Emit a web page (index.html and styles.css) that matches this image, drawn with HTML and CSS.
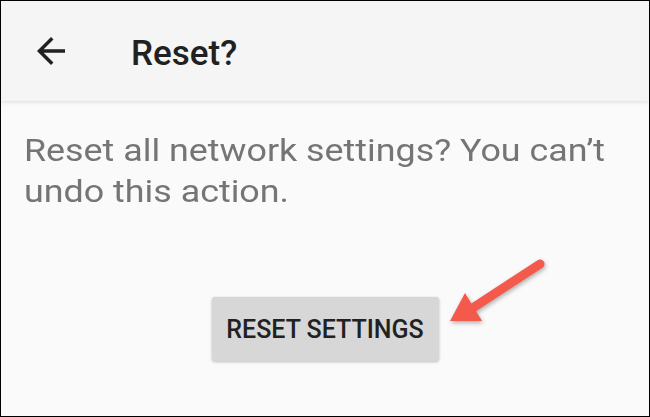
FILE: index.html
```html
<!DOCTYPE html>
<html lang="en">
<head>
    <meta charset="UTF-8">
    <meta name="viewport" content="width=device-width, initial-scale=1.0">
    <title>Reset?</title>
    <link rel="stylesheet" href="styles.css">
</head>
<body>
    <div class="screen">
        <header class="app-bar">
            <svg class="back-icon" viewBox="0 0 24 24" width="42" height="42">
                <path d="M20 11H7.83l5.59-5.59L12 4l-8 8 8 8 1.41-1.41L7.83 13H20v-2z" fill="#212121"/>
            </svg>
            <h1>Reset?</h1>
        </header>

        <main class="content">
            <p class="message">Reset all network settings? You can’t undo this action.</p>
            <div class="actions">
                <button class="reset-btn">RESET SETTINGS</button>
            </div>
        </main>

        <!-- annotation arrow -->
        <svg class="pointer" viewBox="0 0 110 80" width="110" height="80">
            <line x1="100" y1="13" x2="25" y2="62" stroke="#f45a4c" stroke-width="9" stroke-linecap="round"/>
            <polygon points="10,70 25,42 42,70" fill="#f45a4c"/>
        </svg>
    </div>
</body>
</html>
```

FILE: styles.css
```css
* {
    box-sizing: border-box;
}
body {
    margin: 0;
    font-family: Roboto, "Noto Sans", Arial, sans-serif;
}
.screen {
    position: relative;
    width: 650px;
    height: 417px;
    border: 1px solid #000;
    background: #fafafa;
    overflow: hidden;
}
.app-bar {
    display: flex;
    align-items: center;
    height: 100px;
    padding-left: 29px;
    background: #f5f5f5;
    box-shadow: 0 1px 4px rgba(0, 0, 0, 0.12);
    position: relative;
}
.back-icon {
    display: block;
}
.app-bar h1 {
    margin: 4px 0 0 59px;
    font-size: 35px;
    font-weight: 500;
    color: #212121;
}
.content {
    padding: 29px 23px 0;
}
/* the device font runs a bit wider than Roboto */
.message {
    margin: 0;
    width: 550px;
    font-size: 32px;
    line-height: 41px;
    color: #757575;
    transform: scaleX(1.12);
    transform-origin: left top;
}
.actions {
    display: flex;
    justify-content: center;
    margin-top: 85px;
}
.reset-btn {
    width: 227px;
    height: 64px;
    border: none;
    border-radius: 3px;
    background: #d6d7d6;
    box-shadow: 0 1px 3px rgba(0, 0, 0, 0.25);
    font-family: Roboto, "Noto Sans", Arial, sans-serif;
    font-size: 25px;
    font-weight: 500;
    color: #212121;
    padding: 0;
}
.pointer {
    position: absolute;
    left: 439px;
    top: 250px;
    filter: drop-shadow(1px 2px 2px rgba(0, 0, 0, 0.3));
}
```
